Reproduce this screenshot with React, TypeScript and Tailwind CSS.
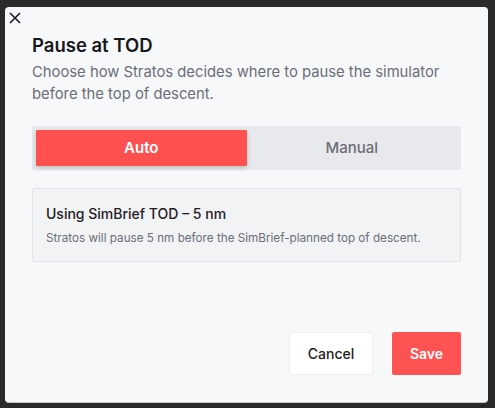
import { useState } from "react";

const font = { fontFamily: 'Inter, "Noto Sans", "Liberation Sans", sans-serif' };

export default function App() {
  const [mode, setMode] = useState<"auto" | "manual">("auto");

  return (
    <div className="w-[495px] h-[408px] bg-[#2a2a2a] pl-[5px] pt-[7px] overflow-hidden" style={font}>
      <div className="relative w-[483px] h-[395px] bg-[#f7f8fa] rounded-[4px] shadow-[0_1px_0_#c9cacd] flex flex-col px-[27px] pt-[24px] pb-[27px]">
        {/* close */}
        <button className="absolute left-[3px] top-[4px] w-[14px] h-[14px] flex items-center justify-center text-[#1b1c20]">
          <svg width="12" height="12" viewBox="0 0 12 12" fill="none" stroke="currentColor" strokeWidth="1.6">
            <path d="M1 1l10 10M11 1L1 11" />
          </svg>
        </button>

        <h2 className="text-[18.5px] leading-[28px] font-semibold text-[#17181c]">Pause at TOD</h2>
        <p className="mt-[2px] text-[14.8px] leading-[22px] text-[#6b6e78]">
          Choose how Stratos decides where to pause the simulator before the top of descent.
        </p>

        {/* segmented control */}
        <div className="mt-[21px] h-[44px] bg-[#e8e9ec] rounded-[2px] p-[4px] flex">
          <button
            onClick={() => setMode("auto")}
            className={
              mode === "auto"
                ? "flex-1 bg-[#ff5050] text-white text-[15px] font-semibold rounded-[1px] shadow-[0_2px_5px_rgba(0,0,0,0.18)]"
                : "flex-1 text-[#6b6e78] text-[15px] font-medium"
            }
          >
            Auto
          </button>
          <button
            onClick={() => setMode("manual")}
            className={
              mode === "manual"
                ? "flex-1 bg-[#ff5050] text-white text-[15px] font-semibold rounded-[1px] shadow-[0_2px_5px_rgba(0,0,0,0.18)]"
                : "flex-1 text-[#6b6e78] text-[15px] font-medium"
            }
          >
            Manual
          </button>
        </div>

        {/* info */}
        <div className="mt-[18px] h-[74px] bg-[#f2f3f5] border border-[#e2e3e6] rounded-[2px] px-[13px] pt-[15px]">
          <div className="text-[14px] leading-[20px] font-medium text-[#1f2023]">Using SimBrief TOD – 5 nm</div>
          <div className="mt-[6px] text-[11.7px] leading-[16px] text-[#6b6e78]">
            Stratos will pause 5 nm before the SimBrief-planned top of descent.
          </div>
        </div>

        <div className="mt-auto flex justify-end gap-[19px]">
          <button className="w-[84px] h-[43px] bg-white border border-[#eceef1] rounded-[2px] text-[14px] font-medium text-[#1f2023]">
            Cancel
          </button>
          <button className="w-[69px] h-[43px] bg-[#ff5252] rounded-[2px] text-[14px] font-semibold text-white">
            Save
          </button>
        </div>
      </div>
    </div>
  );
}
